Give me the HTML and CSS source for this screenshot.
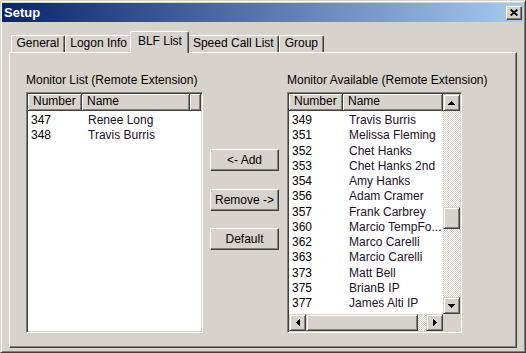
FILE: index.html
```html
<!DOCTYPE html>
<html>
    <head>
        <link rel="stylesheet" href="styles.css">
    </head>
    <body>
        <div class="window">
            <div class="titlebar">
                <span class="title">Setup</span>
                <div class="close">
                    <svg width="8" height="7" viewBox="0 0 8 7"><path d="M0.6 0.5L7.4 6.5M7.4 0.5L0.6 6.5" stroke="#000" stroke-width="1.8"/></svg>
                </div>
            </div>

            <div class="tabs">
                <div class="tab">General</div>
                <div class="tab">Logon Info</div>
                <div class="tab active">BLF List</div>
                <div class="tab">Speed Call List</div>
                <div class="tab">Group</div>
            </div>

            <div class="panel">
                <div class="group groupLeft">
                    <div class="label">Monitor List (Remote Extension)</div>
                    <div class="listbox">
                        <div class="header">
                            <div class="hcell hcellNum">Number</div>
                            <div class="hcell hcellNameWide">Name</div>
                            <div class="hcell hcellFill"></div>
                        </div>
                        <div class="rows">
                            <div class="row"><span class="cellNum">347</span><span class="cellName">Renee Long</span></div>
                            <div class="row"><span class="cellNum">348</span><span class="cellName">Travis Burris</span></div>
                        </div>
                    </div>
                </div>

                <div class="buttons">
                    <button class="btn">&lt;- Add</button>
                    <button class="btn">Remove -&gt;</button>
                    <button class="btn">Default</button>
                </div>

                <div class="group groupRight">
                    <div class="label">Monitor Available (Remote Extension)</div>
                    <div class="listbox scroller">
                        <div class="view">
                            <div class="header">
                                <div class="hcell hcellNum">Number</div>
                                <div class="hcell hcellName">Name</div>
                            </div>
                            <div class="rows">
                                <div class="row"><span class="cellNum">349</span><span class="cellName">Travis Burris</span></div>
                                <div class="row"><span class="cellNum">351</span><span class="cellName">Melissa Fleming</span></div>
                                <div class="row"><span class="cellNum">352</span><span class="cellName">Chet Hanks</span></div>
                                <div class="row"><span class="cellNum">353</span><span class="cellName">Chet Hanks 2nd</span></div>
                                <div class="row"><span class="cellNum">354</span><span class="cellName">Amy Hanks</span></div>
                                <div class="row"><span class="cellNum">356</span><span class="cellName">Adam Cramer</span></div>
                                <div class="row"><span class="cellNum">357</span><span class="cellName">Frank Carbrey</span></div>
                                <div class="row"><span class="cellNum">360</span><span class="cellName">Marcio TempFo...</span></div>
                                <div class="row"><span class="cellNum">362</span><span class="cellName">Marco Carelli</span></div>
                                <div class="row"><span class="cellNum">363</span><span class="cellName">Marcio Carelli</span></div>
                                <div class="row"><span class="cellNum">373</span><span class="cellName">Matt Bell</span></div>
                                <div class="row"><span class="cellNum">375</span><span class="cellName">BrianB IP</span></div>
                                <div class="row"><span class="cellNum">377</span><span class="cellName">James Alti IP</span></div>
                            </div>
                        </div>

                        <div class="vscroll">
                            <div class="sbtn"><svg width="7" height="4"><path d="M3 0h1v1h1v1h1v1h1v1H0V3h1V2h1V1h1z"/></svg></div>
                            <div class="track trackTop"></div>
                            <div class="thumb thumbV"></div>
                            <div class="track trackFill"></div>
                            <div class="sbtn"><svg width="7" height="4"><path d="M0 0h7v1H6v1H5v1H4v1H3V3H2V2H1V1H0z"/></svg></div>
                        </div>

                        <div class="hscroll">
                            <div class="sbtn"><svg width="4" height="7"><path d="M4 0v7H3V6H2V5H1V4H0V3h1V2h1V1h1V0z"/></svg></div>
                            <div class="thumb thumbH"></div>
                            <div class="track trackFill"></div>
                            <div class="sbtn"><svg width="4" height="7"><path d="M0 0h1v1h1v1h1v1h1v1H3v1H2v1H1v1H0z"/></svg></div>
                        </div>

                        <div class="corner"></div>
                    </div>
                </div>
            </div>
        </div>
    </body>
</html>
```

FILE: styles.css
```css
* {
    box-sizing: border-box;
}

body {
    margin: 0;
    background-color: #d8d2cc;
    font-family: "Liberation Sans", Arial, sans-serif;
    font-size: 12px;
    color: #000;
}

.window {
    width: 526px;
    height: 353px;
    border: 1px solid;
    border-color: #d8d2cc #404040 #404040 #d8d2cc;
    box-shadow: inset 1px 1px #fff, inset -1px -1px #808080;
    padding: 2px 2px 0 1px;
    display: flex;
    flex-direction: column;
}

/* title bar */
.titlebar {
    height: 19px;
    background: linear-gradient(to right, #0a246a, #a6caf0);
    display: flex;
    align-items: center;
    justify-content: space-between;
    padding: 0 1px 0 2px;
}

.title {
    color: #fff;
    font-weight: bold;
    font-size: 13px;
}

.close {
    width: 16px;
    height: 14px;
    background-color: #d8d2cc;
    border: 1px solid;
    border-color: #fff #404040 #404040 #fff;
    box-shadow: inset -1px -1px #808080;
    display: flex;
    align-items: center;
    justify-content: center;
}

/* tabs */
.tabs {
    display: flex;
    align-items: flex-end;
    height: 21px;
    margin: 9px 0 0 9px;
}

.tab {
    height: 17px;
    padding: 0 4.5px;
    line-height: 15px;
    background-color: #d8d2cc;
    border: 1px solid;
    border-bottom: none;
    border-color: #fff #404040 #404040 #fff;
    box-shadow: inset -1px 0 #808080;
    border-radius: 2px 2px 0 0;
    white-space: nowrap;
}

.tab.active {
    position: relative;
    z-index: 1;
    height: 22px;
    line-height: 19px;
    margin: 0 -2px -1px;
    padding: 0 6.5px;
}

/* panel */
.panel {
    margin-left: 7px;
    width: 508px;
    height: 296px;
    border: 1px solid;
    border-color: #fff #404040 #404040 #fff;
    box-shadow: inset -1px -1px #808080;
    display: flex;
    align-items: flex-start;
    padding: 20px 0 0 16px;
}

.group {
    display: flex;
    flex-direction: column;
}

.groupLeft {
    width: 177px;
}

.groupRight {
    width: 175px;
    margin-left: 8px;
}

.label {
    line-height: 14px;
    margin-bottom: 5px;
    white-space: nowrap;
}

/* list boxes */
.listbox {
    height: 241px;
    background-color: #fff;
    border: 1px solid;
    border-color: #808080 #fff #fff #808080;
    box-shadow: inset 1px 1px #404040, inset -1px -1px #d8d2cc;
    padding: 1px;
    overflow: hidden;
}

.header {
    display: flex;
    height: 17px;
}

.hcell {
    background-color: #d8d2cc;
    border-right: 1px solid #404040;
    border-bottom: 1px solid #404040;
    box-shadow: inset 1px 1px #fff, inset -1px -1px #808080;
    line-height: 15px;
    padding-left: 5px;
    white-space: nowrap;
}

.hcellNum {
    width: 54px;
}

.hcellName {
    width: 100px;
}

.hcellNameWide {
    width: 108px;
}

.hcellFill {
    flex: 1;
}

.rows {
    padding-top: 2px;
}

.row {
    display: flex;
    height: 15.25px;
    line-height: 15.25px;
    white-space: nowrap;
}

.cellNum {
    width: 54px;
    padding-left: 3px;
}

.cellName {
    padding-left: 6px;
    color: #24102a;
}

/* scrolling list */
.scroller {
    display: grid;
    grid-template-columns: 1fr 17px;
    grid-template-rows: 1fr 17px;
}

.view {
    overflow: hidden;
}

.vscroll {
    display: flex;
    flex-direction: column;
}

.hscroll {
    display: flex;
}

.sbtn {
    width: 17px;
    height: 17px;
    flex: none;
    background-color: #d8d2cc;
    border: 1px solid;
    border-color: #d8d2cc #404040 #404040 #d8d2cc;
    box-shadow: inset 1px 1px #fff, inset -1px -1px #808080;
    display: flex;
    align-items: center;
    justify-content: center;
}

.thumb {
    flex: none;
    background-color: #d8d2cc;
    border: 1px solid;
    border-color: #d8d2cc #404040 #404040 #d8d2cc;
    box-shadow: inset 1px 1px #fff, inset -1px -1px #808080;
}

.thumbV {
    height: 22px;
}

.thumbH {
    width: 112px;
}

.track {
    background-image: repeating-conic-gradient(#fff 0 25%, #d8d2cc 0 50%);
    background-size: 2px 2px;
}

.trackTop {
    height: 96px;
}

.trackFill {
    flex: 1;
}

.corner {
    background-color: #d8d2cc;
}

/* buttons */
.buttons {
    display: flex;
    flex-direction: column;
    gap: 17.5px;
    width: 69px;
    margin: 76px 0 0 7px;
}

.btn {
    height: 22px;
    padding: 0;
    font: inherit;
    color: #000;
    background-color: #d8d2cc;
    border: 1px solid;
    border-color: #fff #404040 #404040 #fff;
    box-shadow: inset -1px -1px #808080;
}
```
